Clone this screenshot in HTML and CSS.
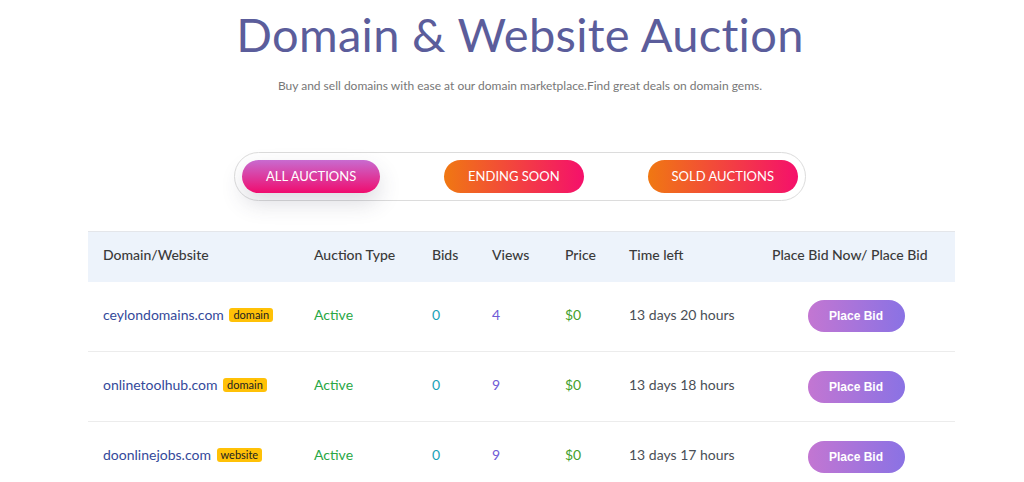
FILE: index.html
```html
<!DOCTYPE html>
<html lang="en">
<head>
<meta charset="utf-8">
<title>Domain &amp; Website Auction</title>
<link rel="stylesheet" href="styles.css">
</head>
<body>
<header class="hero">
  <h1 class="hero-title">Domain &amp; Website Auction</h1>
  <p class="hero-sub">Buy and sell domains with ease at our domain marketplace.Find great deals on domain gems.</p>
</header>

<nav class="tabs-wrap">
  <div class="tabs">
    <a class="tab tab-active" href="#">ALL AUCTIONS</a>
    <a class="tab" href="#">ENDING SOON</a>
    <a class="tab" href="#">SOLD AUCTIONS</a>
  </div>
</nav>

<section class="table-wrap">
  <table class="auctions">
    <colgroup>
      <col class="c-domain"><col class="c-type"><col class="c-bids"><col class="c-views"><col class="c-price"><col class="c-time"><col class="c-action">
    </colgroup>
    <thead>
      <tr>
        <th>Domain/Website</th>
        <th>Auction Type</th>
        <th>Bids</th>
        <th>Views</th>
        <th>Price</th>
        <th>Time left</th>
        <th>Place Bid Now/ Place Bid</th>
      </tr>
    </thead>
    <tbody>
      <tr>
        <td><a class="domain" href="#">ceylondomains.com</a> <span class="badge">domain</span></td>
        <td class="active">Active</td>
        <td class="bids">0</td>
        <td class="views">4</td>
        <td class="price">$0</td>
        <td class="time">13 days 20 hours</td>
        <td class="action"><a class="bid-btn" href="#">Place Bid</a></td>
      </tr>
      <tr>
        <td><a class="domain" href="#">onlinetoolhub.com</a> <span class="badge">domain</span></td>
        <td class="active">Active</td>
        <td class="bids">0</td>
        <td class="views">9</td>
        <td class="price">$0</td>
        <td class="time">13 days 18 hours</td>
        <td class="action"><a class="bid-btn" href="#">Place Bid</a></td>
      </tr>
      <tr>
        <td><a class="domain" href="#">doonlinejobs.com</a> <span class="badge">website</span></td>
        <td class="active">Active</td>
        <td class="bids">0</td>
        <td class="views">9</td>
        <td class="price">$0</td>
        <td class="time">13 days 17 hours</td>
        <td class="action"><a class="bid-btn" href="#">Place Bid</a></td>
      </tr>
    </tbody>
  </table>
</section>
</body>
</html>
```

FILE: styles.css
```css
* { box-sizing: border-box; }

body {
  margin: 0;
  background: #ffffff;
  font-family: "Lato", "Noto Sans", "Liberation Sans", sans-serif;
  color: #555;
}

.hero {
  text-align: center;
  padding-top: 4px;
  padding-left: 16px;
}

.hero-title {
  margin: 0;
  font-size: 47px;
  font-weight: 400;
  line-height: 60px;
  color: #5b5d9b;
  letter-spacing: 0.3px;
}

.hero-sub {
  margin: 13px 0 0;
  font-size: 12px;
  line-height: 18px;
  color: #777;
}

.tabs-wrap {
  display: flex;
  justify-content: center;
  padding-top: 57px;
  padding-left: 16px;
}

.tabs {
  width: 572px;
  height: 49px;
  border: 1px solid #dcdcdc;
  border-radius: 25px;
  padding: 6px 7px;
  display: flex;
  justify-content: space-between;
  align-items: center;
}

.tab {
  height: 33px;
  line-height: 33px;
  padding: 0 24px;
  border-radius: 17px;
  color: #fff;
  text-decoration: none;
  font-size: 13px;
  font-weight: 400;
  background: linear-gradient(90deg, #f07812 0%, #f5106b 100%);
}

.tab-active {
  background: linear-gradient(180deg, #c86bd0 0%, #f00c6e 100%);
  box-shadow: 0 10px 22px rgba(60, 60, 90, 0.18);
}

.table-wrap {
  padding-top: 30px;
  padding-left: 88px;
}

.auctions {
  width: 867px;
  table-layout: fixed;
  border-collapse: collapse;
  font-size: 14px;
}

.c-domain { width: 211px; }
.c-type { width: 118px; }
.c-bids { width: 60px; }
.c-views { width: 73px; }
.c-price { width: 64px; }
.c-time { width: 143px; }
.c-action { width: 198px; }

.auctions thead tr {
  background: #edf3fb;
  border-top: 1px solid #e4e6ea;
}

.auctions th {
  height: 50px;
  padding: 0 0 4px 15px;
  text-align: left;
  font-weight: 500;
  color: #3a3a3a;
  white-space: nowrap;
}

.auctions td {
  height: 70px;
  padding: 0 0 4px 15px;
  border-bottom: 1px solid #ececec;
  white-space: nowrap;
  vertical-align: middle;
}

.domain {
  color: #34499a;
  text-decoration: none;
}

.badge {
  display: inline-block;
  margin-left: 2px;
  padding: 0 4px;
  background: #ffc107;
  border-radius: 3px;
  font-size: 11px;
  line-height: 14px;
  color: #222;
  vertical-align: 1px;
}

.active { color: #28a745; }
.bids { color: #17a2b8; }
.views { color: #6f5bd6; }
.price { color: #43a02b; }
.time { color: #4a4f57; }

.auctions td.action {
  padding: 0;
  text-align: center;
}

.bid-btn {
  display: inline-block;
  width: 97px;
  height: 32px;
  line-height: 32px;
  border-radius: 16px;
  background: linear-gradient(90deg, #c376d2 0%, #8a72e4 100%);
  color: #fff;
  text-decoration: none;
  font-family: "Liberation Sans", Arial, sans-serif;
  font-weight: 700;
  font-size: 12px;
}
```
